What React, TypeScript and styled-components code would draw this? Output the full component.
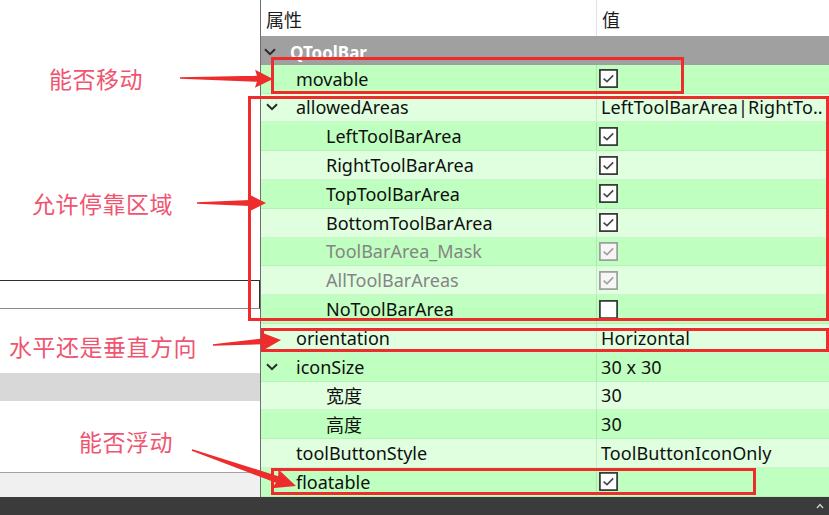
import React from "react";
import styled, { createGlobalStyle } from "styled-components";

const Global = createGlobalStyle`
  html, body { margin: 0; padding: 0; background: #ffffff; }
  body { font-family: "Noto Sans", "Noto Sans CJK SC", sans-serif; }
  #root { width: 829px; height: 515px; }
`;

const Page = styled.div`
  position: relative;
  width: 829px;
  height: 515px;
  overflow: hidden;
  display: flex;
  flex-direction: column;
  background: #ffffff;
`;

const Main = styled.div`
  display: flex;
  height: 497px;
`;

const LeftPanel = styled.div`
  width: 260px;
  flex: none;
  display: flex;
  flex-direction: column;
  background: #ffffff;
  border-right: 1px solid #6f6f6f;
`;

const Blank = styled.div<{ $h: number }>`
  height: ${(p) => p.$h}px;
  flex: none;
  background: #ffffff;
`;

const FieldBox = styled.div`
  height: 27px;
  flex: none;
  border-top: 1px solid #2e2e2e;
  border-right: 1px solid #2e2e2e;
  border-bottom: 1px solid #8a8a8a;
  background: #ffffff;
`;

const GrayBand = styled.div`
  height: 28px;
  flex: none;
  background: #d8d8d8;
`;

const StatusStrip = styled.div`
  flex: 1;
  border-top: 1px solid #a3a3a3;
  background: #f0f0f0;
`;

const Table = styled.div`
  flex: 1;
  display: flex;
  flex-direction: column;
  font-size: 18px;
  color: #101010;
`;

const HeaderRow = styled.div`
  height: 36px;
  flex: none;
  display: grid;
  grid-template-columns: 336px 1fr;
  background: #ffffff;
`;

const HeaderCell = styled.div<{ $divider?: boolean }>`
  display: flex;
  align-items: center;
  padding-left: 5px;
  padding-top: 2px;
  font-size: 18px;
  color: #1a1a1a;
  border-right: ${(p) => (p.$divider ? "1px solid #e2e2e2" : "none")};
`;

const CategoryRow = styled.div`
  height: 28.8px;
  box-sizing: border-box;
  flex: none;
  display: flex;
  align-items: center;
  background: #a0a0a0;
  color: #ffffff;
  font-weight: 700;
  font-size: 17px;
  padding-left: 3px;
  padding-top: 4px;
`;

const Row = styled.div<{ $tone: "bright" | "pale" }>`
  height: 28.8px;
  flex: none;
  box-sizing: border-box;
  display: grid;
  grid-template-columns: 336px 1fr;
  background: ${(p) => (p.$tone === "bright" ? "#bfffbf" : "#dfffdf")};
  border-bottom: 1px solid rgba(120, 160, 120, 0.14);
`;

const NameCell = styled.div<{ $level: number; $disabled?: boolean }>`
  display: flex;
  align-items: center;
  padding-left: ${(p) => 5 + p.$level * 30}px;
  border-right: 1px solid rgba(110, 150, 110, 0.22);
  color: ${(p) => (p.$disabled ? "#858585" : "#101010")};
  white-space: nowrap;
  overflow: hidden;
`;

const ValueCell = styled.div`
  display: flex;
  align-items: center;
  padding-left: 4px;
  white-space: nowrap;
  overflow: hidden;
  letter-spacing: 0.1px;
`;

const ChevronSlot = styled.span<{ $w: number }>`
  width: ${(p) => p.$w}px;
  flex: none;
  display: flex;
  align-items: center;
  justify-content: flex-start;
`;

const BottomBar = styled.div`
  height: 18px;
  flex: none;
  background: #3b3b3b;
  display: flex;
  align-items: center;
  justify-content: flex-end;
  padding-right: 5px;
`;

const Overlay = styled.svg`
  position: absolute;
  left: 0;
  top: 0;
  width: 829px;
  height: 515px;
  pointer-events: none;
`;

const RedBox = styled.div<{ $x: number; $y: number; $w: number; $h: number }>`
  position: absolute;
  left: ${(p) => p.$x}px;
  top: ${(p) => p.$y}px;
  width: ${(p) => p.$w}px;
  height: ${(p) => p.$h}px;
  box-sizing: border-box;
  border: 3px solid #ee2c2c;
  pointer-events: none;
`;

const Note = styled.div<{ $x: number; $y: number }>`
  position: absolute;
  left: ${(p) => p.$x}px;
  top: ${(p) => p.$y}px;
  font-family: "Noto Sans CJK SC", "Noto Sans", sans-serif;
  font-size: 23px;
  line-height: 28px;
  color: #ef5570;
  letter-spacing: 0.5px;
  white-space: nowrap;
`;

const Chevron = ({ color = "#2a2a2a" }: { color?: string }) => (
  <svg width="12" height="8" viewBox="0 0 12 8">
    <path d="M1 1.2 L6 6.2 L11 1.2" fill="none" stroke={color} strokeWidth="2" />
  </svg>
);

const Check = ({ checked, disabled }: { checked: boolean; disabled?: boolean }) => {
  const c = disabled ? "#9c9c9c" : "#333333";
  return (
    <svg width="19" height="19" viewBox="0 0 19 19" style={{ marginLeft: -2 }}>
      <rect x="0.9" y="0.9" width="17.2" height="17.2" fill={disabled ? "#f6f6f6" : "#ffffff"} stroke={c} strokeWidth="1.7" />
      {checked && <path d="M4.6 9.6 L8 12.6 L14.2 6.4" fill="none" stroke={disabled ? "#a0a0a0" : "#454545"} strokeWidth="1.6" />}
    </svg>
  );
};

type Prop = {
  name: string;
  level: number;
  expand?: boolean;
  disabled?: boolean;
  value?: string;
  check?: boolean;
};

const props: Prop[] = [
  { name: "movable", level: 0, check: true },
  { name: "allowedAreas", level: 0, expand: true, value: "LeftToolBarArea|RightTo.." },
  { name: "LeftToolBarArea", level: 1, check: true },
  { name: "RightToolBarArea", level: 1, check: true },
  { name: "TopToolBarArea", level: 1, check: true },
  { name: "BottomToolBarArea", level: 1, check: true },
  { name: "ToolBarArea_Mask", level: 1, check: true, disabled: true },
  { name: "AllToolBarAreas", level: 1, check: true, disabled: true },
  { name: "NoToolBarArea", level: 1, check: false },
  { name: "orientation", level: 0, value: "Horizontal" },
  { name: "iconSize", level: 0, expand: true, value: "30 x 30" },
  { name: "宽度", level: 1, value: "30" },
  { name: "高度", level: 1, value: "30" },
  { name: "toolButtonStyle", level: 0, value: "ToolButtonIconOnly" },
  { name: "floatable", level: 0, check: true },
];

function arrow(x1: number, y1: number, x2: number, y2: number, headLen: number, headW: number, shaftW: number) {
  const dx = x2 - x1;
  const dy = y2 - y1;
  const L = Math.hypot(dx, dy);
  const ux = dx / L;
  const uy = dy / L;
  const nx = -uy;
  const ny = ux;
  const bx = x2 - ux * headLen;
  const by = y2 - uy * headLen;
  const pts = [
    [x1 + nx * 0.8, y1 + ny * 0.8],
    [bx + nx * shaftW, by + ny * shaftW],
    [bx + nx * headW - ux * 2, by + ny * headW - uy * 2],
    [x2, y2],
    [bx - nx * headW - ux * 2, by - ny * headW - uy * 2],
    [bx - nx * shaftW, by - ny * shaftW],
    [x1 - nx * 0.8, y1 - ny * 0.8],
  ];
  return pts.map((p) => `${p[0].toFixed(1)},${p[1].toFixed(1)}`).join(" ");
}

const arrows = [
  arrow(180, 78, 273, 79, 16, 9, 3),
  arrow(197, 203, 266, 203, 16, 9, 3),
  arrow(213, 345, 281, 340, 17, 9, 3),
  arrow(192, 450, 296, 486, 20, 10, 3.5),
];

export default function App() {
  return (
    <Page>
      <Global />
      <Main>
        <LeftPanel>
          <Blank $h={280} />
          <FieldBox />
          <Blank $h={64} />
          <GrayBand />
          <Blank $h={71} />
          <StatusStrip />
        </LeftPanel>
        <Table>
          <HeaderRow>
            <HeaderCell $divider>属性</HeaderCell>
            <HeaderCell>值</HeaderCell>
          </HeaderRow>
          <CategoryRow>
            <ChevronSlot $w={26}>
              <Chevron color="#2a2a2a" />
            </ChevronSlot>
            QToolBar
          </CategoryRow>
          {props.map((p, i) => (
            <Row key={p.name} $tone={i % 2 === 0 ? "bright" : "pale"}>
              <NameCell $level={p.level} $disabled={p.disabled}>
                <ChevronSlot $w={30}>{p.expand && <Chevron />}</ChevronSlot>
                {p.name}
              </NameCell>
              <ValueCell>
                {p.check !== undefined ? <Check checked={p.check} disabled={p.disabled} /> : p.value}
              </ValueCell>
            </Row>
          ))}
        </Table>
      </Main>
      <BottomBar>
        <svg width="8" height="6" viewBox="0 0 8 6">
          <path d="M1 5 L4 1.5 L7 5" fill="none" stroke="#cfcfcf" strokeWidth="1.4" />
        </svg>
      </BottomBar>

      <RedBox $x={271} $y={57} $w={413} $h={37} />
      <RedBox $x={248} $y={96} $w={581} $h={225} />
      <RedBox $x={261} $y={328} $w={568} $h={24} />
      <RedBox $x={271} $y={468} $w={485} $h={27} />

      <Overlay viewBox="0 0 829 515">
        {arrows.map((pts, i) => (
          <polygon key={i} points={pts} fill="#ee2c2c" />
        ))}
      </Overlay>

      <Note $x={49} $y={64}>能否移动</Note>
      <Note $x={32} $y={189}>允许停靠区域</Note>
      <Note $x={9} $y={332}>水平还是垂直方向</Note>
      <Note $x={79} $y={427}>能否浮动</Note>
    </Page>
  );
}
